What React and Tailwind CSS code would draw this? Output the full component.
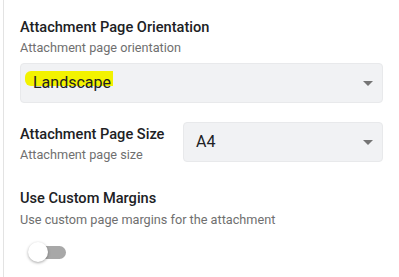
import { useState } from "react";

const Caret = () => (
    <svg width="10" height="5" viewBox="0 0 10 5" className="shrink-0">
        <path d="M0 0 L10 0 L5 5 Z" fill="#757575" />
    </svg>
);

const SelectBox = ({ children, className = "" }) => (
    <div className={`flex h-10 items-center justify-between rounded-[4px] border border-[#e8e9eb] bg-[#f1f2f4] pl-3 pr-[9px] ${className}`}>
        <div className="text-[16px] text-[#202124]">{children}</div>
        <Caret />
    </div>
);

const App = () => {
    const [useMargins, setUseMargins] = useState(false);

    return (
        <div className="h-[277px] w-[399px] overflow-hidden bg-white font-['Roboto',sans-serif]">
            <div className="ml-[3px] h-full border-l border-[#e3e3e3] pl-4 pr-4 pt-[17px]">
                <div className="text-[14.6px] font-medium leading-5 text-[#202124]">Attachment Page Orientation</div>
                <div className="mt-[3px] text-[12.7px] leading-4 text-[#6f6f6f]">Attachment page orientation</div>
                <SelectBox className="mt-[7px]">
                    <span className="relative inline-block">
                        <span className="absolute left-[-8px] right-[-2px] top-[0px] h-[15px] rounded-l-[6px] bg-[#f2f200]" />
                        <span className="relative">Landscape</span>
                    </span>
                </SelectBox>

                <div className="mt-[19px] flex">
                    <div className="w-[163px] shrink-0 pt-[2px]">
                        <div className="text-[14.6px] font-medium leading-5 text-[#202124]">Attachment Page Size</div>
                        <div className="mt-[3px] text-[12.7px] leading-4 text-[#6f6f6f]">Attachment page size</div>
                    </div>
                    <SelectBox className="flex-1">A4</SelectBox>
                </div>

                <div className="mt-[25px] text-[14.6px] font-medium leading-5 text-[#202124]">Use Custom Margins</div>
                <div className="mt-[4px] text-[12.7px] leading-4 text-[#6f6f6f]">Use custom page margins for the attachment</div>

                <button
                    onClick={() => setUseMargins(!useMargins)}
                    className="relative mt-[14px] ml-[8px] flex h-[20px] w-[38px] items-center"
                >
                    <span className={`ml-[2px] h-[13px] w-[36px] rounded-full ${useMargins ? "bg-[#90caf9]" : "bg-[#a8a8a8]"}`} />
                    <span
                        className={`absolute top-0 h-[20px] w-[20px] rounded-full shadow-[0_1px_3px_rgba(0,0,0,0.35)] ${useMargins ? "left-[18px] bg-[#1976d2]" : "left-0 bg-white"}`}
                    />
                </button>
            </div>
        </div>
    );
};

export default App;
